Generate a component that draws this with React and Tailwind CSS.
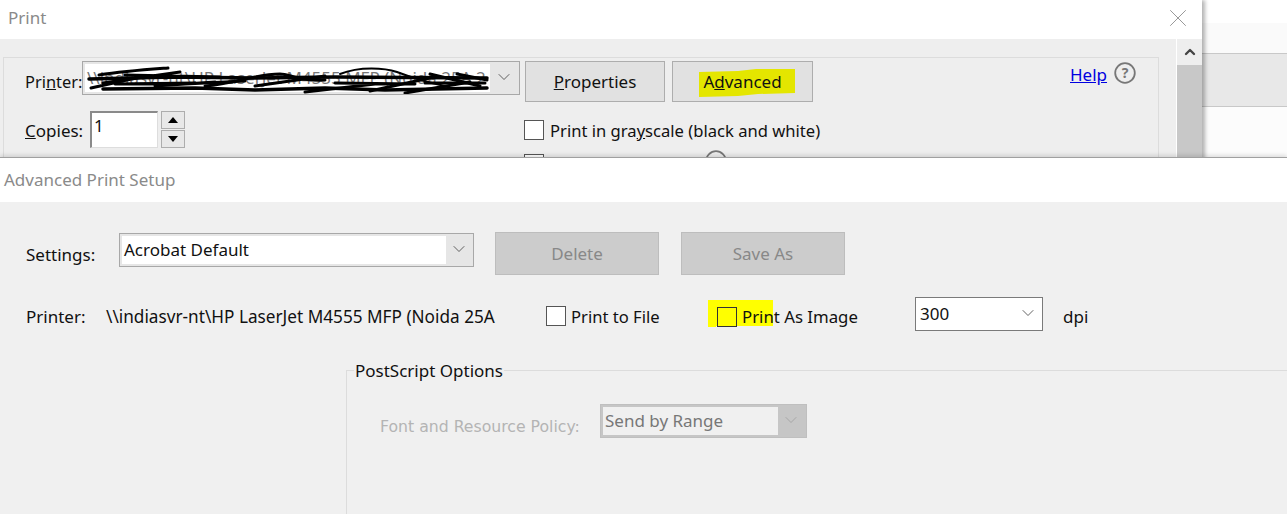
import React from 'react';
import { X, ChevronDown, ChevronUp } from 'lucide-react';

const Combo = ({ children, className, textClass, chevron = 'text-[#444]', inner = 'bg-white', innerWidth }) => (
    <div className={`flex items-stretch border p-[2px] ${className}`}>
        <div className={`flex items-center pl-[2px] overflow-hidden whitespace-nowrap ${inner} ${innerWidth} ${textClass}`}>{children}</div>
        <div className="flex-1 flex items-center justify-center">
            <ChevronDown className={`w-[20px] h-[20px] -mt-[2px] ${chevron}`} strokeWidth={1} />
        </div>
    </div>
);

const Checkbox = ({ className = 'bg-white border-[#555]' }) => (
    <span className={`block w-[20px] h-[20px] border ${className}`} />
);

const Scribble = () => (
    <svg className="absolute left-[3px] top-[1px] w-[410px] h-[32px]" viewBox="0 0 410 32" fill="none" stroke="#000" strokeLinecap="round" strokeLinejoin="round">
        <path strokeWidth="3" d="M14 13 C40 9 70 7 83 6" />
        <path strokeWidth="3.5" d="M4 17 L90 15 L170 16 L250 15 L402 16" />
        <path strokeWidth="3" d="M6 26 L60 14 M18 21 L95 10 M40 13 L135 15" />
        <path strokeWidth="3.5" d="M18 27 L110 26 L170 28 L240 26 L300 28 L402 26" />
        <path strokeWidth="3" d="M120 24 C150 22 170 12 195 12 C205 12 215 20 240 18" />
        <path strokeWidth="2" d="M255 12 C275 4 300 6 312 10 C325 15 340 20 360 24" />
        <path strokeWidth="3" d="M170 24 L240 14 M285 29 L345 16 M320 31 L385 20 M345 12 L395 24 M372 12 L402 18" />
        <path strokeWidth="3" d="M220 30 L290 22 M100 22 L160 19 M70 24 L130 20 M30 22 L110 21 M250 21 L330 22 M340 21 L400 21" />
    </svg>
);

const App = () => {
    return (
        <div className="w-[1287px] h-[514px] overflow-hidden flex flex-col bg-[#f0f0f0] text-[17px] text-[#111] font-['Noto_Sans',sans-serif]">
            {/* Print dialog, behind */}
            <div className="h-[157px] flex overflow-hidden shrink-0">
                <div className="relative z-10 w-[1202px] h-[200px] flex flex-col shadow-[3px_0_4px_rgba(0,0,0,0.3)]">
                    <div className="h-[39px] bg-white flex items-center justify-between pl-[8px] pr-[9px] text-[#8a8a8a]">
                        <span className="-mt-[3px]">Print</span>
                        <X className="w-[30px] h-[30px] -mt-[3px] text-[#777]" strokeWidth={0.6} />
                    </div>
                    <div className="flex-1 flex bg-[#eeeeee] pl-[3px]">
                        <div className="w-[1156px] mt-[18px] border border-[#dcdcdc]">
                            <div className="flex items-start pt-[3px] pl-[21px]">
                                <span className="w-[57px] h-[34px] pt-[8px] flex items-center text-[16.4px]">Pri<u>n</u>ter:</span>
                                <div className="relative">
                                    <Combo className="w-[438px] h-[34px] border-[#a8a8a8] bg-[#e6e6e6]" innerWidth="w-[405px]" textClass="text-[#777]">
                                        \\indiasvr-nt\HP LaserJet M4555 MFP (Noida 25A 2
                                    </Combo>
                                    <Scribble />
                                </div>
                                <button className="ml-[5px] w-[140px] h-[41px] border border-[#adadad] bg-[#e1e1e1]"><u>P</u>roperties</button>
                                <button className="relative ml-[7px] w-[141px] h-[41px] border border-[#adadad] bg-[#e1e1e1]">
                                    <svg className="absolute left-[25px] top-[6px] w-[98px] h-[30px]" viewBox="0 0 98 30">
                                        <path fill="#e4e600" d="M1 4 L40 3 L58 1 L97 1 L97 25 L60 26 L40 28 L1 29 Z" />
                                    </svg>
                                    <span className="relative">A<u>d</u>vanced</span>
                                </button>
                                <a className="ml-[257px] mt-[1px] text-[#0000e0] underline">Help</a>
                                <svg className="ml-[7px] mt-[1px] w-[22px] h-[22px]" viewBox="0 0 22 22" fill="none">
                                    <circle cx="11" cy="11" r="9.8" stroke="#777" strokeWidth="1.8" />
                                    <text x="11" y="16" textAnchor="middle" fontSize="14" fontWeight="700" fill="#777">?</text>
                                </svg>
                            </div>
                            <div className="flex items-start pl-[21px] mt-[9px]">
                                <span className="w-[65px] h-[37px] pt-[2px] flex items-center"><u>C</u>opies:</span>
                                <div className="w-[68px] h-[37px] border border-t-2 border-l-2 border-[#8a8a8a] border-r-[#ddd] border-b-[#ddd] bg-white pl-[2px]">1</div>
                                <div className="ml-[3px] w-[24px] flex flex-col gap-[1px]">
                                    <div className="h-[18px] border border-[#adadad] bg-[#e8e8e8] flex items-center justify-center">
                                        <span className="w-0 h-0 border-x-[5px] border-x-transparent border-b-[6px] border-b-black" />
                                    </div>
                                    <div className="h-[18px] border border-[#adadad] bg-[#e8e8e8] flex items-center justify-center">
                                        <span className="w-0 h-0 border-x-[5px] border-x-transparent border-t-[6px] border-t-black" />
                                    </div>
                                </div>
                                <div className="ml-[339px] pt-[9px] flex flex-col gap-[14px]">
                                    <label className="flex items-center h-[20px] gap-[6px]">
                                        <Checkbox />
                                        <span className="pt-[2px] text-[16.6px]">Print in gra<u>y</u>scale (black and white)</span>
                                    </label>
                                    <div className="flex items-start h-[20px]">
                                        <Checkbox />
                                        <svg className="ml-[161px] -mt-[4px] w-[22px] h-[22px]" viewBox="0 0 22 22" fill="none">
                                            <circle cx="11" cy="11" r="9.8" stroke="#777" strokeWidth="1.8" />
                                        </svg>
                                    </div>
                                </div>
                            </div>
                        </div>
                        <div className="ml-[17px] w-[26px] border-l border-white flex flex-col">
                            <div className="h-[26px] flex items-center justify-center">
                                <ChevronUp className="w-[16px] h-[16px] text-[#444]" strokeWidth={3.5} />
                            </div>
                            <div className="flex-1 bg-[#c8c8c8]" />
                        </div>
                    </div>
                </div>
                {/* Window behind Print */}
                <div className="flex-1 flex flex-col bg-[#fcfcfc]">
                    <div className="h-[23px] bg-white" />
                    <div className="h-[30px] bg-[#fafafa]" />
                    <div className="h-[54px] bg-[#e8e8e8] border-y border-[#c8c8c8]" />
                </div>
            </div>

            {/* Advanced Print Setup */}
            <div className="relative z-20 flex-1 flex flex-col border-t border-[#a0a0a0] shadow-[0_-2px_4px_rgba(0,0,0,0.12)]">
                <div className="h-[44px] bg-white flex items-center pl-[4px] text-[#8a8a8a]">Advanced Print Setup</div>
                <div className="flex-1 bg-[#f0f0f0]">
                    <div className="flex items-start pl-[26px] pt-[30px]">
                        <span className="w-[93px] h-[44px] pt-[1px] flex items-center">Settings:</span>
                        <Combo className="w-[355px] h-[34px] mt-[1px] border-[#a8a8a8] bg-[#e6e6e6]" innerWidth="w-[324px]">Acrobat Default</Combo>
                        <button className="ml-[21px] w-[164px] h-[43px] bg-[#cccccc] border border-[#bdbdbd] text-[#888]">Delete</button>
                        <button className="ml-[22px] w-[164px] h-[43px] bg-[#cccccc] border border-[#bdbdbd] text-[#888]">Save As</button>
                    </div>
                    <div className="flex items-center pl-[26px] mt-[21px] h-[34px]">
                        <span className="w-[80px] pt-[6px]">Printer:</span>
                        <span className="w-[440px] pt-[6px] whitespace-nowrap text-[17.2px]">\\indiasvr-nt\HP LaserJet M4555 MFP (Noida 25A</span>
                        <label className="w-[162px] flex items-center gap-[5px] pt-[5px]">
                            <Checkbox />
                            <span className="pt-[1px] text-[16.6px]">Print to File</span>
                        </label>
                        <label className="relative w-[207px] flex items-center gap-[5px] pl-[9px] pt-[5px]">
                            <svg className="absolute left-0 top-[2px] w-[65px] h-[27px]" viewBox="0 0 65 27">
                                <path fill="#ffff00" d="M0 0 L65 0 L65 26 L8 26 L8 27 L0 27 Z" />
                            </svg>
                            <Checkbox className="relative border-[#333]" />
                            <span className="relative pt-[1px] text-[16.8px]">Print As Image</span>
                        </label>
                        <Combo className="w-[128px] h-[34px] border-[#7a7a7a] bg-white" innerWidth="w-[98px]">300</Combo>
                        <span className="ml-[20px] pt-[6px]">dpi</span>
                    </div>
                    <fieldset className="ml-[346px] mt-[27px] h-[200px] border-t border-l border-[#dcdcdc]">
                        <legend className="ml-[7px] px-px">PostScript Options</legend>
                        <div className="flex items-start pl-[33px] mt-[20px]">
                            <span className="w-[220px] pt-[11px] font-['DejaVu_Sans',sans-serif] text-[15.7px] whitespace-nowrap text-[#b4b4b4]">Font and Resource Policy:</span>
                            <Combo className="w-[207px] h-[34px] border-[#bfbfbf] bg-[#c6c6c6]" innerWidth="w-[175px]" inner="bg-[#f0f0f0]" textClass="text-[#777]" chevron="text-[#a0a0a0]">Send by Range</Combo>
                        </div>
                    </fieldset>
                </div>
            </div>
        </div>
    );
};

export default App;
